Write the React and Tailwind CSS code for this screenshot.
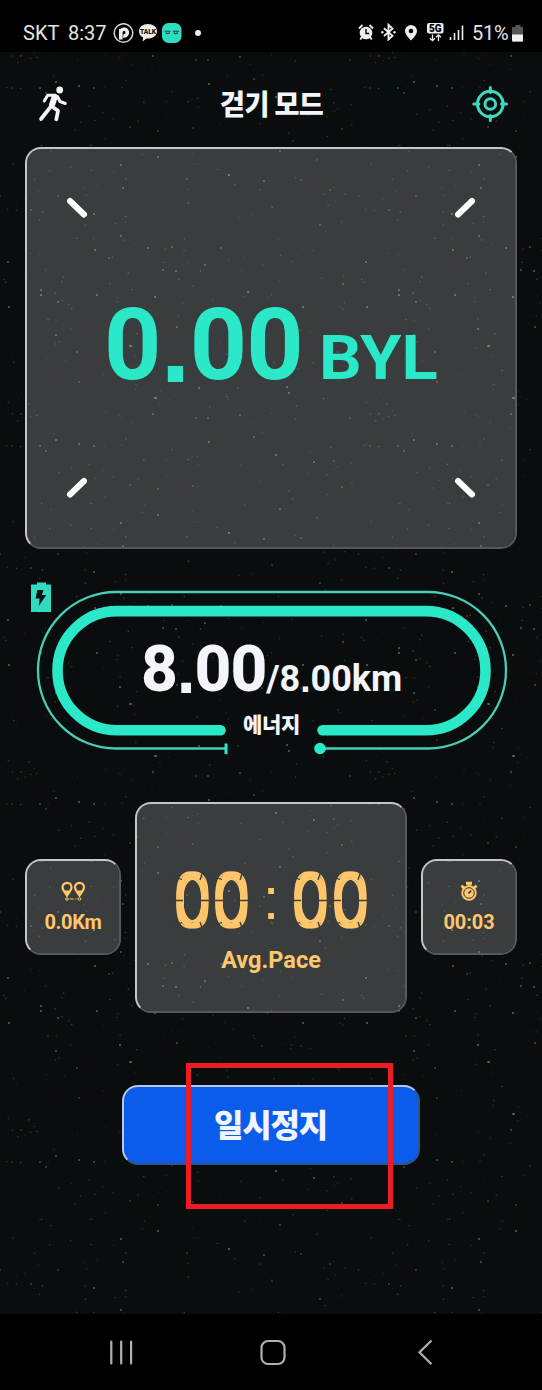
import React from "react";

const TILE = 358;

// Brightest specks of the repeating sky tile: x, y, colour
const BRIGHT = [
  [56, 82, "#3fae7c"], [79, 86, "#3fa387"], [94, 88, "#3d8f7f"], [46, 93, "#56705a"], [40, 88, "#3f8b66"],
  [12, 88, "#5a3a30"], [21, 56, "#7a3028"], [153, 56, "#6d7d60"], [208, 60, "#6b6b40"], [209, 84, "#93a255"],
  [196, 60, "#6d4a3a"], [240, 57, "#5a8c78"], [254, 79, "#4b7a60"], [193, 128, "#8a3a28"], [130, 127, "#7a3f2a"],
  [158, 131, "#80502a"], [121, 165, "#4aa088"], [158, 157, "#8a8d60"], [229, 175, "#a5a890"], [264, 181, "#58907c"],
  [123, 188, "#4f8b7b"], [187, 179, "#93402c"], [58, 196, "#913e4a"], [94, 214, "#a29560"], [109, 258, "#a8304a"],
  [95, 250, "#9a9a55"], [121, 236, "#4a9888"], [148, 248, "#6f9a6c"], [41, 290, "#4fb888"], [58, 302, "#3f9f8a"],
  [97, 295, "#48a08a"], [155, 297, "#8fa090"], [163, 270, "#4f8c80"], [176, 271, "#6e9090"], [205, 265, "#5b9484"],
  [172, 247, "#a0603c"], [221, 248, "#8a4634"], [248, 292, "#7ca896"], [56, 335, "#4ea18a"], [77, 352, "#b63c50"],
  [177, 327, "#b0583a"], [130, 346, "#90805a"], [199, 30, "#7c9078"], [156, 40, "#64a092"], [79, 24, "#a23540"],
  [31, 210, "#94404c"], [343, 284, "#b6603a"], [9, 307, "#4fae8c"], [41, 295, "#58a898"], [303, 307, "#4eaa8c"],
  [120, 329, "#5cb48c"], [131, 346, "#92a068"], [287, 29, "#4aa68c"], [289, 35, "#50a37c"], [276, 97, "#92a077"],
  [314, 104, "#8a9070"], [342, 129, "#93502c"], [280, 151, "#3f9080"], [155, 40, "#54a88c"], [8, 262, "#4fae70"],
  [301, 180, "#a03438"], [330, 190, "#7a4a30"], [262, 330, "#9a3030"], [320, 225, "#48806c"], [350, 60, "#6d4040"],
];

function makeFaint(count) {
  let s = 7129;
  const rnd = () => {
    s = (s * 1103515245 + 12345) % 2147483648;
    return s / 2147483648;
  };
  const tones = ["#5c3a30", "#34594c", "#6a5a3c", "#3a4a48", "#6b3236", "#4a5a40"];
  return Array.from({ length: count }, () => [rnd() * TILE, rnd() * TILE, tones[Math.floor(rnd() * 6)], 0.35 + rnd() * 0.5]);
}
const FAINT = makeFaint(300);

function Sky() {
  return (
    <svg className="absolute inset-0 h-full w-full opacity-70" aria-hidden="true">
      <defs>
        <pattern id="sky" width={TILE} height={TILE} patternUnits="userSpaceOnUse">
          {FAINT.map(([x, y, c, r], i) => (
            <circle key={i} cx={x} cy={y} r={r} fill={c} />
          ))}
          {BRIGHT.map(([x, y, c], i) => (
            <circle key={i} cx={x} cy={y} r="0.95" fill={c} />
          ))}
        </pattern>
      </defs>
      <rect width="100%" height="100%" fill="url(#sky)" />
    </svg>
  );
}

function StatusBar() {
  return (
    <div className="relative flex h-[52px] items-start bg-black pt-[23px] pl-[23px] font-['Roboto',sans-serif] text-[20px] leading-[20px] text-[#e4e4e4]">
      <span className="w-[45px]">SKT</span>
      <span className="w-[45px]">8:37</span>
      <svg className="h-[21px] w-[21px]" viewBox="0 0 21 21">
        <circle cx="10.5" cy="10" r="9.3" fill="none" stroke="#d6d6d6" strokeWidth="1.5" />
        <path d="M7.800 16.500V6M7.800 8.800a3.300 3.300 0 1 1 2.500 4" fill="none" stroke="#f0f0f0" strokeWidth="3.600" />
      </svg>
      <svg className="ml-[4px] h-[20px] w-[20px]" viewBox="0 0 20 20">
        <path d="M10 1c5 0 9 3 9 7.300s-4 7.300-9 7.300l-1.500-.1L4.500 18.500l.7-3.900C2.600 13.300 1 11 1 8.300 1 4 5 1 10 1z" fill="#ececec" />
        <text x="10" y="10.800" textAnchor="middle" fontSize="6.600" fontWeight="900" fill="#111" fontFamily="Roboto, sans-serif">TALK</text>
      </svg>
      <svg className="ml-[4px] h-[20px] w-[20px]" viewBox="0 0 20 20">
        <rect x="0" y="0" width="19.500" height="20" rx="6.500" fill="#2fdcc2" />
        <path d="M2.500 8.300h6M11 8.300h6M4 9.500c.5 1.600 3 1.600 3.500 0M12 9.500c.5 1.600 3 1.600 3.500 0" fill="none" stroke="#12463f" strokeWidth="1.100" />
      </svg>
      <span className="mt-[7px] ml-[13px] h-[6px] w-[6px] rounded-full bg-[#f2f2f2]" />
      <svg className="ml-[157px] h-[18px] w-[16px]" viewBox="0 0 16 18">
        <circle cx="8" cy="10" r="6.300" fill="#eee" />
        <path d="M1 5.500L4.500 2M15 5.500L11.500 2M3.800 14l-1.500 2.500M12.200 14l1.500 2.500" stroke="#eee" strokeWidth="1.800" />
        <path d="M8 6v4.500h3.200" fill="none" stroke="#000" strokeWidth="1.400" />
      </svg>
      <svg className="ml-[7px] h-[18px] w-[15px]" viewBox="0 0 15 18">
        <path d="M3 5.200l8.500 7.500L7.500 16.500V1.800l4 3.800L3 13" fill="none" stroke="#eee" strokeWidth="1.900" />
        <circle cx="1.300" cy="9.200" r="1.200" fill="#eee" />
        <circle cx="13.500" cy="9.200" r="1.200" fill="#eee" />
      </svg>
      <svg className="ml-[8px] h-[18px] w-[14px]" viewBox="0 0 14 18">
        <path d="M7 2a6 6 0 0 1 6 6c0 4-6 9.500-6 9.500S1 12 1 8a6 6 0 0 1 6-6z" fill="#eee" />
        <circle cx="7" cy="8" r="2.300" fill="#000" />
      </svg>
      <svg className="ml-[9px] h-[19px] w-[17px]" viewBox="0 0 17 19">
        <rect x="0" y="0" width="16.500" height="10.500" rx="1.800" fill="#eee" />
        <text x="8.200" y="8.800" textAnchor="middle" fontSize="10" fontWeight="900" fill="#000" fontFamily="Roboto, sans-serif">5G</text>
        <path d="M5.500 11.500v6M3 15.200l2.500 2.500L8 15.200M11.500 18v-6M9 14.300l2.500-2.500 2.500 2.500" fill="none" stroke="#eee" strokeWidth="1.300" />
      </svg>
      <svg className="ml-[5px] h-[18px] w-[15px]" viewBox="0 0 15 18">
        <path d="M1.500 14v3M5.500 10v7M9.500 7v10M13.500 2.500V17" stroke="#eee" strokeWidth="1.600" />
      </svg>
      <span className="ml-[8px] w-[40px] tracking-[-0.2px]">51%</span>
      <svg className="mt-[2px] h-[17px] w-[12px]" viewBox="0 0 12 17">
        <path d="M3.500 0h5v2H11v15H0V2h3.500z" fill="#555" />
        <path d="M0 9.500h11V15a1.500 1.500 0 0 1-1.500 1.500h-8A1.500 1.500 0 0 1 0 15z" fill="#f2f2f2" />
      </svg>
    </div>
  );
}

function Header() {
  return (
    <header className="flex h-[95px] items-start pl-[36px]">
      <svg className="mt-[33px] h-[38px] w-[34px]" viewBox="36 85 34 38" fill="none" stroke="#f4f5fa" strokeLinecap="round" strokeLinejoin="round">
        <circle cx="59.700" cy="90" r="3.400" fill="#f4f5fa" stroke="none" />
        <path d="M54.500 97.500L52 105" strokeWidth="6" />
        <path d="M55.500 95.300h-7.800L44.300 101" strokeWidth="3" />
        <path d="M57.500 96.500L60 101.500l5.300 2" strokeWidth="3" />
        <path d="M50.500 107L41 119M52 106.500l6 4.300-1.700 8.500" strokeWidth="3.700" />
      </svg>
      <h1 className="mt-[37px] ml-[150px] w-[110px] origin-left scale-x-[0.97] font-['Noto_Sans_CJK_KR',sans-serif] text-[28px] leading-[28px] font-black tracking-[-0.6px] whitespace-nowrap text-[#f4f5fa]">
        걷기 모드
      </h1>
      <svg className="mt-[34px] ml-[142px] h-[36px] w-[36px]" viewBox="0 0 36 36" fill="none" stroke="#40d9c0">
        <circle cx="18.300" cy="18" r="12.800" strokeWidth="3" />
        <circle cx="18.300" cy="18" r="5.300" strokeWidth="3" />
        <path d="M18.300 1.500v5M18.300 29.500v5M1.800 18h5M29.500 18h5" strokeWidth="3" strokeLinecap="round" />
      </svg>
    </header>
  );
}

const glass = "border-2 border-t-[#c4c6c7] border-l-[#c4c6c7] border-r-[#56585a] border-b-[#56585a] bg-white/20 bg-clip-padding";

function Balance() {
  return (
    <section className={`relative mx-[25px] flex h-[402px] items-baseline rounded-[16px] pt-[136px] pl-[77px] font-['Roboto',sans-serif] font-bold text-[#2be8c9] ${glass}`}>
      <svg className="absolute inset-0 h-full w-full" viewBox="27 149 488 398" stroke="#fff" strokeWidth="6" strokeLinecap="round">
        <path d="M70 201l14 13.500M472 201l-14 13.500M70 494.500l14-13.500M472 494.500L458 481" />
      </svg>
      <span className="text-[100px] leading-[120px] tracking-[-0.8px] whitespace-nowrap">
        0<span className="relative top-[3px] font-['Liberation_Sans',sans-serif] text-[108px] leading-[100px]">.</span>00
      </span>
      <span className="ml-[16px] origin-left scale-x-[1.08] text-[62px] leading-[62px]">BYL</span>
    </section>
  );
}

function Energy() {
  return (
    <section className="relative mt-[31px] h-[185px] font-['Roboto',sans-serif] text-[#f4f5fa]">
      <svg className="absolute inset-0 h-full w-full" viewBox="0 580 542 185" fill="none" stroke="#2be8c9">
        <path d="M226 748.500H116a78 78.250 0 0 1 0-156.500H428a78 78.250 0 0 1 0 156.500H320" stroke="#48cdb9" strokeWidth="2.300" />
        <path d="M220.500 730.300H117a59.500 59.600 0 0 1 0-119.200H426a59.500 59.600 0 0 1 0 119.200H322.500" strokeWidth="10.600" strokeLinecap="round" />
        <path d="M226 743.500v10.500" strokeWidth="3" />
        <circle cx="320" cy="748.500" r="5.800" fill="#2be8c9" stroke="none" />
        <path d="M37 582.500h9V584.500h4.500q.5 0 .5.500v27H31v-27q0-.5.500-.5H37z" fill="#2fdcc2" stroke="none" />
        <path d="M37.300 590h6.200l-1.700 5h4.500l-7.500 11 .8-7.500h-4z" fill="#0a0e0d" stroke="none" />
      </svg>
      <div className="relative flex h-[121px] items-baseline pt-[51px] pl-[141px] font-bold">
        <span className="text-[64px] leading-[78px] font-extrabold tracking-[-1.1px]">
          8<span className="relative top-[2px] font-['Liberation_Sans',sans-serif] text-[68px] leading-[64px]">.</span>00
        </span>
        <span className="text-[36px] leading-[36px]">
          /8<span className="relative top-px font-['Liberation_Sans',sans-serif] text-[37px] leading-[36px]">.</span>00km
        </span>
      </div>
      <div className="relative mt-[12px] pl-[243px] font-['Noto_Sans_CJK_KR',sans-serif] text-[21px] leading-[21px] font-black tracking-[-0.3px]">에너지</div>
    </section>
  );
}

const segmentInk =
  "origin-center scale-x-[0.87] font-thin [text-shadow:3.200px_0_0_currentColor,-3.200px_0_0_currentColor,0_2.800px_0_currentColor,0_-2.800px_0_currentColor,3.200px_2.800px_0_currentColor,-3.200px_-2.800px_0_currentColor,-3.200px_2.800px_0_currentColor,3.200px_-2.800px_0_currentColor,1.600px_0_0_currentColor,-1.600px_0_0_currentColor,0_1.400px_0_currentColor,0_-1.400px_0_currentColor]";

function Clock({ value }) {
  return (
    <div className="relative h-[58px] w-[194px] text-[71px] leading-[58px]">
      <div className="flex h-[58px] justify-between">
        {value.split("").map((ch, i) => (
          <span key={i} className={ch === ":" ? "flex w-[36px] justify-center font-['Liberation_Sans',sans-serif] text-[60px] leading-[54px] font-normal" : "flex w-[36px] justify-center"}>
            <span className={ch === ":" ? "" : segmentInk}>{ch}</span>
          </span>
        ))}
      </div>
      <svg className="absolute inset-0 h-full w-full" viewBox="0 0 194 58" stroke="#3a3c3d" strokeWidth="1.300">
        {[0, 40, 118, 158].map((x) => (
          <path key={x} d={`M${x - 1} 4.500l9 3M${x + 26} 8l3-9M${x - 1} 28.500h10M${x + 25} 28.500h11M${x - 1} 53.500l9-3M${x + 26} 50l3 9`} />
        ))}
      </svg>
    </div>
  );
}

function Stats() {
  const small = `mt-[57px] flex h-[96px] w-[96px] flex-col items-center rounded-[16px] text-[20px] leading-[20px] font-bold ${glass}`;
  return (
    <section className="mx-[25px] mt-[37px] flex h-[211px] justify-between font-['Roboto',sans-serif] text-[#ffc66b]">
      <div className={small}>
        <svg className="mt-[20px] h-[20px] w-[26px]" viewBox="0 0 26 20" fill="none" stroke="#ffc66b">
          <path d="M7 14.500C4.500 11 2.500 9 2.500 6.300a4.500 4.500 0 0 1 9 0C11.500 9 9.500 11 7 14.500zM19.500 14.500C17 11 15 9 15 6.300a4.500 4.500 0 0 1 9 0c0 2.700-2 4.700-4.500 8.200z" strokeWidth="2.200" />
          <path d="M4.500 9.500L7 15l2.500-5.500zM17 9.500l2.500 5.500L22 9.500z" fill="#ffc66b" stroke="none" />
          <circle cx="7" cy="18" r="1.300" />
          <circle cx="19.500" cy="18" r="1.300" />
          <path d="M9.500 18h4m1 0h1m1 0h1" strokeWidth="1" />
        </svg>
        <span className="mt-[11px] tracking-[-0.3px]">0.0Km</span>
      </div>
      <div className={`flex w-[272px] flex-col items-center rounded-[16px] pt-[68px] ${glass}`}>
        <Clock value="00:00" />
        <span className="mt-[17px] text-[23.5px] leading-[26px] font-bold">Avg.Pace</span>
      </div>
      <div className={small}>
        <svg className="mt-[20px] h-[20px] w-[20px]" viewBox="0 0 20 20">
          <path d="M7 .8h6v3H7zM8.500 3h3v3h-3zM1.500 5.500l2-1.800L6 6 4 8zM18.500 5.500l-2-1.800L14 6l2 2z" fill="#ffc66b" />
          <circle cx="10" cy="12" r="7.700" fill="#ffc66b" />
          <circle cx="10" cy="12" r="5.300" fill="none" stroke="#3a3c3d" strokeWidth="1" />
          <path d="M9.500 12.500l2.600-2.800" stroke="#3a3c3d" strokeWidth="1.700" />
        </svg>
        <span className="mt-[11px] tracking-[-0.1px]">00:03</span>
      </div>
    </section>
  );
}

function NavBar() {
  return (
    <nav className="relative flex h-[76px] items-center bg-black pl-[107px]">
      <svg className="h-[28px] w-[28px]" viewBox="0 0 28 28" stroke="#b0b0b0" strokeWidth="2.200" strokeLinecap="round">
        <path d="M4.300 3.500v22M14.200 3.500v22M24.100 3.500v22" />
      </svg>
      <svg className="ml-[124px] h-[28px] w-[28px]" viewBox="0 0 28 28" fill="none" stroke="#b0b0b0" strokeWidth="2.200">
        <rect x="2.500" y="3" width="23" height="23" rx="6.500" />
      </svg>
      <svg className="ml-[128px] h-[28px] w-[20px]" viewBox="0 0 20 28" fill="none" stroke="#b0b0b0" strokeWidth="2.200">
        <path d="M16.500 2.500L4.500 14.300l12 12" />
      </svg>
    </nav>
  );
}

export default function App() {
  return (
    <main className="relative flex h-[1390px] w-[542px] flex-col overflow-hidden bg-[#090d0d]">
      <Sky />
      <StatusBar />
      <div className="relative flex flex-1 flex-col">
        <Header />
        <Balance />
        <Energy />
        <Stats />
        <button className="mt-[72px] ml-[122px] flex h-[80px] w-[298px] items-start rounded-[16px] border-2 border-t-[#b9c6ea] border-r-[#33538f] border-b-[#33538f] border-l-[#b9c6ea] bg-[#0b5ceb] pt-[20px] pl-[90px] font-['Noto_Sans_CJK_KR',sans-serif] text-[32px] leading-[32px] font-black tracking-[-1.2px] whitespace-nowrap text-[#f0f5ff]">
          일시정지
        </button>
      </div>
      <div className="absolute top-[1063px] left-[186px] h-[146px] w-[207px] border-5 border-[#ea1c24]" />
      <NavBar />
    </main>
  );
}
